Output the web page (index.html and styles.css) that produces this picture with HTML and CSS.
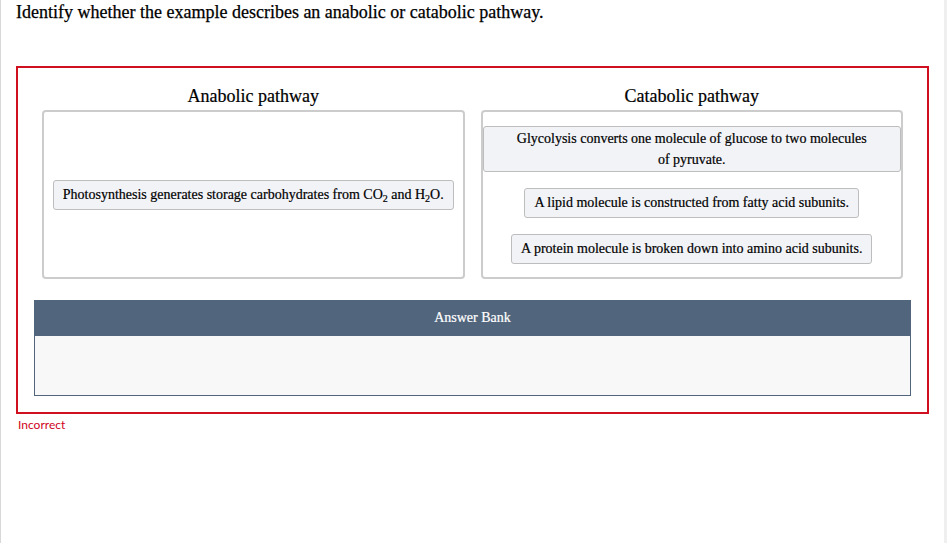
FILE: index.html
```html
<!DOCTYPE html>
<html lang="en">
<head>
<meta charset="utf-8">
<title>Anabolic or catabolic</title>
<link rel="stylesheet" href="styles.css">
</head>
<body>
<div class="page">
  <h1 class="prompt">Identify whether the example describes an anabolic or catabolic pathway.</h1>
  <div class="question incorrect-frame">
    <div class="columns">
      <div class="column">
        <div class="column-title">Anabolic pathway</div>
        <div class="dropzone">
          <div class="card"><span>Photosynthesis generates storage carbohydrates from CO<sub>2</sub> and H<sub>2</sub>O.</span></div>
        </div>
      </div>
      <div class="column">
        <div class="column-title">Catabolic pathway</div>
        <div class="dropzone">
          <div class="card card-wide"><span>Glycolysis converts one molecule of glucose to two molecules of pyruvate.</span></div>
          <div class="card"><span>A lipid molecule is constructed from fatty acid subunits.</span></div>
          <div class="card"><span>A protein molecule is broken down into amino acid subunits.</span></div>
        </div>
      </div>
    </div>
    <div class="bank">
      <div class="bank-header">Answer Bank</div>
      <div class="bank-body"></div>
    </div>
  </div>
  <div class="feedback">Incorrect</div>
</div>
</body>
</html>
```

FILE: styles.css
```css
html, body {
  margin: 0;
  padding: 0;
}
body {
  background: #efefef;
  font-family: "Liberation Serif", "Times New Roman", serif;
  color: #000000;
}
.page {
  width: 913px;
  min-height: 543px;
  background: #ffffff;
  border-left: 1px solid #d8d8d8;
  padding: 2px 15px 0 15px;
}
.prompt {
  margin: 0 0 44px 0;
  font-size: 18px;
  font-weight: normal;
  line-height: 20px;
  -webkit-text-stroke: 0.25px #000;
}
.question {
  border: 2px solid #d0101e;
  padding: 16px;
}
.columns {
  display: grid;
  grid-template-columns: 1fr 1fr;
  margin-bottom: 21px;
}
.column {
  padding: 0 8px;
}
.column-title {
  text-align: center;
  font-size: 18px;
  line-height: 24px;
  margin-bottom: 2px;
  -webkit-text-stroke: 0.2px #000;
}
.dropzone {
  box-sizing: border-box;
  height: 169px;
  border: 2px solid #cccccc;
  border-radius: 4px;
  display: flex;
  flex-direction: column;
  justify-content: center;
  align-items: center;
  gap: 16px;
}
.card {
  box-sizing: border-box;
  min-height: 30px;
  display: flex;
  align-items: center;
  justify-content: center;
  text-align: center;
  padding: 1px 9px;
  border: 1px solid #bdbdbd;
  border-radius: 3px;
  background: #f2f3f7;
  font-size: 14px;
  line-height: 21px;
  color: #000;
  -webkit-text-stroke: 0.2px #000;
}
.card-wide {
  align-self: stretch;
  padding: 1px 30px;
}
.card sub {
  font-size: 10px;
  line-height: 0;
  vertical-align: -3px;
}
.bank {
  border: 1px solid #51657d;
  border-top: none;
}
.bank-header {
  height: 36px;
  background: #51657d;
  color: #ffffff;
  font-size: 14px;
  display: flex;
  align-items: center;
  justify-content: center;
  -webkit-text-stroke: 0.2px #fff;
}
.bank-body {
  height: 59px;
  background: #f8f8f8;
}
.feedback {
  margin-top: 3px;
  padding-left: 2px;
  font-family: Lato, "Open Sans", sans-serif;
  font-size: 12px;
  color: #d0021b;
}
```
